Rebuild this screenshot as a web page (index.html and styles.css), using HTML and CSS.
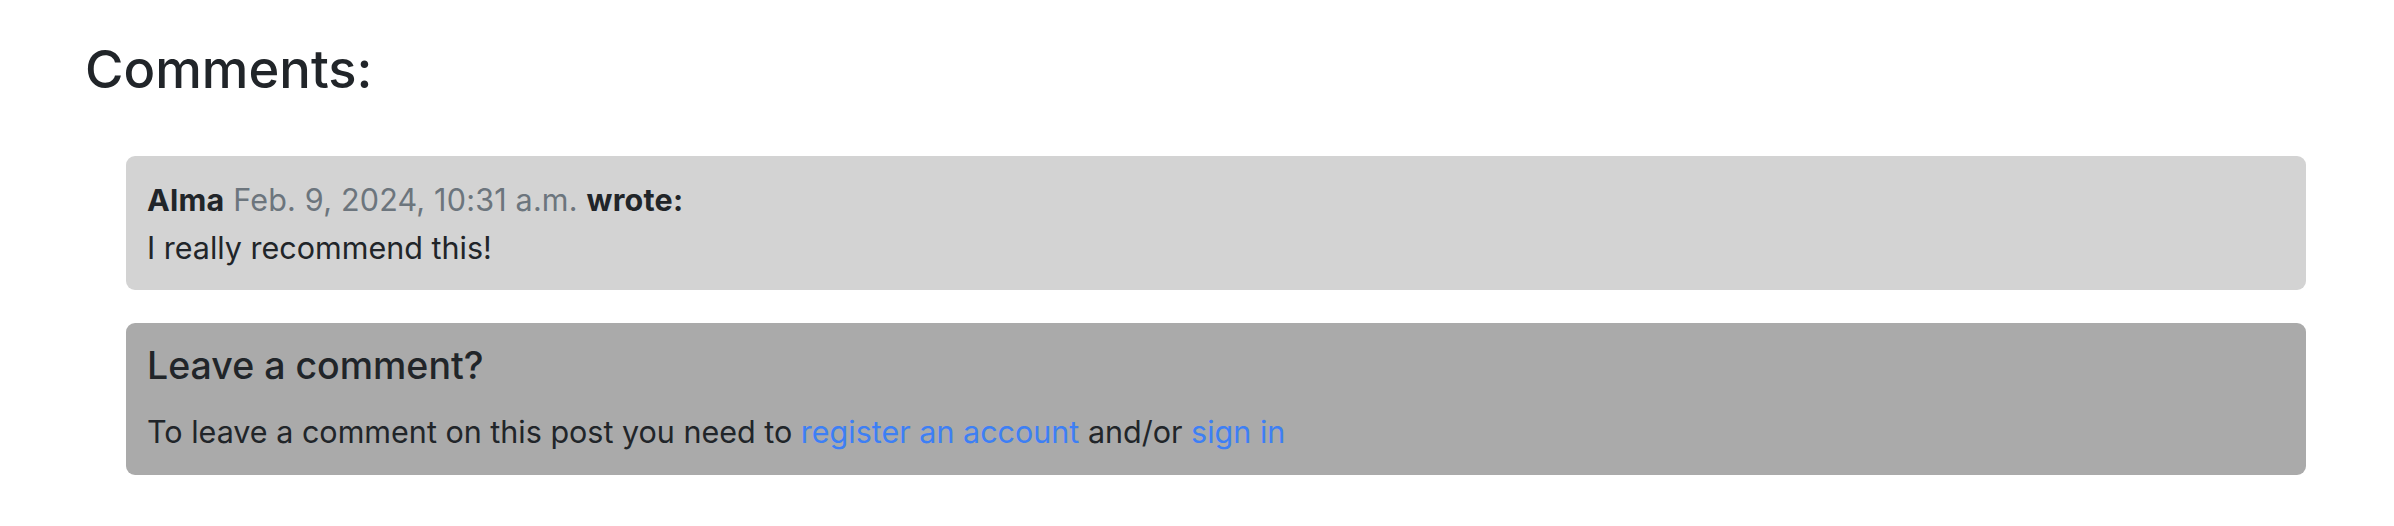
FILE: index.html
```html
<!DOCTYPE html>
<html lang="en">
<head>
<meta charset="utf-8">
<title>Comments</title>
<link rel="stylesheet" href="styles.css">
</head>
<body>
<main class="page">
  <h2 class="section-title">Comments:</h2>
  <div class="comment-list">
    <div class="comment">
      <p class="comment-meta"><strong>Alma</strong> <span class="muted">Feb. 9, 2024, 10:31 a.m.</span> <strong>wrote:</strong></p>
      <p class="comment-body">I really recommend this!</p>
    </div>
    <div class="leave">
      <h3 class="leave-title">Leave a comment?</h3>
      <p class="leave-text">To leave a comment on this post you need to <a href="#">register an account</a> and/or <a href="#">sign in</a></p>
    </div>
  </div>
</main>
</body>
</html>
```

FILE: styles.css
```css
html, body {
  margin: 0;
  padding: 0;
  background: #ffffff;
}
body {
  font-family: Inter, "Noto Sans", "Liberation Sans", sans-serif;
  color: #212529;
  font-size: 30.5px;
  line-height: 40px;
}
.page {
  padding: 37px 88px 40px 85px;
}
.section-title {
  margin: 0;
  font-size: 52.5px;
  font-weight: 500;
  line-height: 64px;
}
.comment-list {
  margin: 55px 0 0 41px;
  display: flex;
  flex-direction: column;
  gap: 33px;
}
.comment {
  background: #d3d3d3;
  border-radius: 9px;
  padding: 24px 21px 22px;
}
.comment p, .leave p {
  margin: 0;
}
.comment-meta {
  letter-spacing: 0.2px;
}
.comment-body {
  margin-top: 8px !important;
}
.muted {
  color: #6c757d;
}
strong {
  font-weight: 700;
}
.leave {
  background: #aaaaaa;
  border-radius: 9px;
  padding: 20px 21px 23px;
}
.leave-title {
  margin: 0;
  font-size: 37.5px;
  font-weight: 500;
  line-height: 46px;
}
.leave-text {
  margin-top: 23px !important;
}
.leave a {
  color: #3d7ff5;
  text-decoration: none;
}
```
